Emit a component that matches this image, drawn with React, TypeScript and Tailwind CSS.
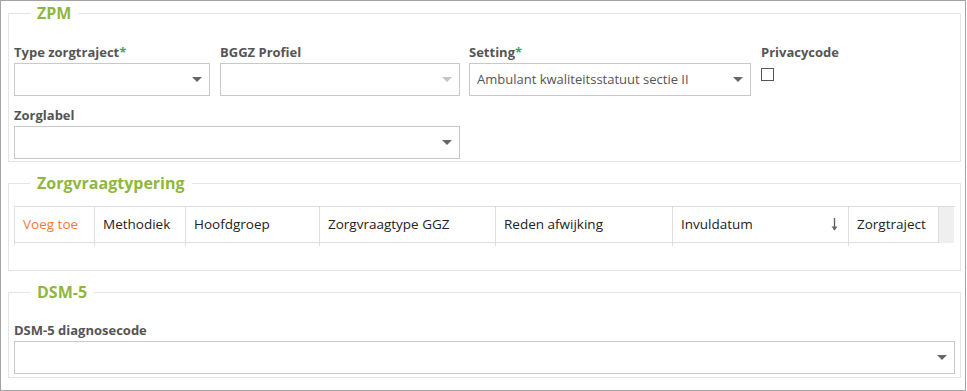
import type { ReactNode } from 'react';

const font = { fontFamily: '"Open Sans", "Noto Sans", sans-serif' };

function Caret({ light }: { light?: boolean }) {
  return (
    <svg width="10" height="5" viewBox="0 0 10 5" className="shrink-0">
      <path d="M0 0h10L5 5z" fill={light ? '#c4c4c4' : '#666'} />
    </svg>
  );
}

function Select({ value, disabled, className }: { value?: string; disabled?: boolean; className?: string }) {
  return (
    <div
      className={`h-[33px] border border-[#c9c9c9] bg-white flex items-center pl-[7px] pr-[7px] ${className ?? ''}`}
    >
      <span className="flex-1 truncate text-[13px] text-[#555]">{value}</span>
      <Caret light={disabled} />
    </div>
  );
}

function Label({ children, required }: { children: ReactNode; required?: boolean }) {
  return (
    <div className="text-[13px] leading-[18px] font-bold text-[#555] mb-[2px] whitespace-nowrap">
      {children}
      {required && <span className="text-[#3aa66e]">*</span>}
    </div>
  );
}

function Section({ title, className, children }: { title: string; className?: string; children: ReactNode }) {
  return (
    <fieldset className={`border border-[#e4e4e4] px-[5px] ${className ?? ''}`}>
      <legend className="ml-[16px] px-[7px] text-[16px] leading-[14px] font-bold text-[#8fb73e]">{title}</legend>
      {children}
    </fieldset>
  );
}

const columns = [
  { title: 'Voeg toe', w: 'w-[80px]', orange: true },
  { title: 'Methodiek', w: 'w-[91px]' },
  { title: 'Hoofdgroep', w: 'w-[134px]' },
  { title: 'Zorgvraagtype GGZ', w: 'w-[176px]' },
  { title: 'Reden afwijking', w: 'w-[177px]' },
  { title: 'Invuldatum', w: 'w-[176px]', sort: true },
  { title: 'Zorgtraject', w: 'w-[90px]' },
];

export default function App() {
  return (
    <div style={font} className="w-[966px] h-[391px] border border-[#a3a3a3] bg-white pt-[5px] pl-[7px] pr-[4px]">
      <Section title="ZPM" className="pt-[23px] pb-[2px]">
        <div className="flex">
          <div className="w-[196px]">
            <Label required>Type zorgtraject</Label>
            <Select />
          </div>
          <div className="w-[240px] ml-[10px]">
            <Label>BGGZ Profiel</Label>
            <Select disabled />
          </div>
          <div className="w-[282px] ml-[9px]">
            <Label required>Setting</Label>
            <Select value="Ambulant kwaliteitsstatuut sectie II" />
          </div>
          <div className="ml-[10px]">
            <Label>Privacycode</Label>
            <div className="mt-[7px] w-[13px] h-[13px] border border-[#555] bg-white" />
          </div>
        </div>
        <div className="mt-[10px] w-[446px]">
          <Label>Zorglabel</Label>
          <Select />
        </div>
      </Section>

      <Section title="Zorgvraagtypering" className="mt-[14px] pt-[16px] h-[95px]">
        <div className="border-t border-[#dedede] flex">
          {columns.map((c) => (
            <div key={c.title} className={`${c.w} border-l border-[#dedede]`}>
              <div className="h-[36px] border-b border-[#dedede] flex items-center pl-[8px] pr-[10px] text-[13.5px] whitespace-nowrap">
                <span className={`flex-1 ${c.orange ? 'text-[#f47b2f]' : 'text-[#222]'}`}>{c.title}</span>
                {c.sort && (
                  <svg width="7" height="13" viewBox="0 0 7 13">
                    <path d="M3.5 0v12" stroke="#666" strokeWidth="1.4" />
                    <path d="M0.5 8.5l3 4 3-4z" fill="#666" />
                  </svg>
                )}
              </div>
              <div className="h-[3px]" />
            </div>
          ))}
          <div className="w-[16px] h-[36px] bg-[#efefef] border-l border-[#dedede]" />
        </div>
      </Section>

      <Section title="DSM-5" className="mt-[14px] pt-[22px] pb-[3px]">
        <Label>DSM-5 diagnosecode</Label>
        <Select />
      </Section>
    </div>
  );
}
